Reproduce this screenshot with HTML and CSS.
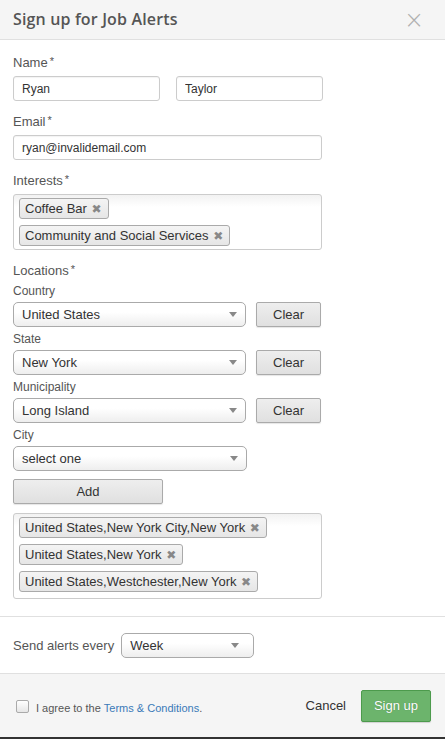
FILE: index.html
```html
<!DOCTYPE html>
<html lang="en">
<head>
    <meta charset="UTF-8">
    <meta name="viewport" content="width=device-width, initial-scale=1.0">
    <title>Sign up for Job Alerts</title>
    <link rel="stylesheet" href="styles.css">
</head>
<body>
    <div class="modal">
        <div class="modal-header">
            <h3>Sign up for Job Alerts</h3>
            <span class="close">&times;</span>
        </div>

        <div class="modal-body">
            <div class="field">
                <label>Name<span class="req">*</span></label>
                <div class="name-row">
                    <input type="text" value="Ryan">
                    <input type="text" value="Taylor">
                </div>
            </div>

            <div class="field">
                <label>Email<span class="req">*</span></label>
                <input type="text" class="wide" value="ryan@invalidemail.com">
            </div>

            <div class="field">
                <label>Interests<span class="req">*</span></label>
                <div class="tag-box">
                    <span class="tag">Coffee Bar <b>&#10006;</b></span>
                    <span class="tag">Community and Social Services <b>&#10006;</b></span>
                </div>
            </div>

            <div class="field locations">
                <label>Locations<span class="req">*</span></label>

                <div class="sub">
                    <div class="sub-label">Country</div>
                    <div class="select-row">
                        <div class="select"><span>United States</span><i class="arrow"></i></div>
                        <button class="btn">Clear</button>
                    </div>
                </div>
                <div class="sub">
                    <div class="sub-label">State</div>
                    <div class="select-row">
                        <div class="select"><span>New York</span><i class="arrow"></i></div>
                        <button class="btn">Clear</button>
                    </div>
                </div>
                <div class="sub">
                    <div class="sub-label">Municipality</div>
                    <div class="select-row">
                        <div class="select"><span>Long Island</span><i class="arrow"></i></div>
                        <button class="btn">Clear</button>
                    </div>
                </div>
                <div class="sub">
                    <div class="sub-label">City</div>
                    <div class="select-row">
                        <div class="select"><span>select one</span><i class="arrow"></i></div>
                    </div>
                </div>

                <button class="btn add-btn">Add</button>

                <div class="tag-box loc-box">
                    <span class="tag">United States,New York City,New York <b>&#10006;</b></span>
                    <span class="tag">United States,New York <b>&#10006;</b></span>
                    <span class="tag">United States,Westchester,New York <b>&#10006;</b></span>
                </div>
            </div>
        </div>

        <div class="alerts-row">
            <span>Send alerts every</span>
            <div class="select small"><span>Week</span><i class="arrow"></i></div>
        </div>

        <div class="modal-footer">
            <label class="agree">
                <span class="checkbox"></span>
                I agree to the <a href="#">Terms &amp; Conditions</a>.
            </label>
            <a href="#" class="cancel">Cancel</a>
            <button class="btn-green">Sign up</button>
        </div>
    </div>
</body>
</html>
```

FILE: styles.css
```css
* {
    margin: 0;
    padding: 0;
    box-sizing: border-box;
    font-family: 'Liberation Sans', Arial, sans-serif;
}

body {
    background-color: #333;
    height: 739px;
    overflow: hidden;
}

.modal {
    background-color: #fff;
    height: 737px;
    display: flex;
    flex-direction: column;
}

.modal-header {
    background-color: #f5f5f5;
    border-bottom: 1px solid #e0e0e0;
    height: 40px;
    padding: 0 13px;
    display: flex;
    align-items: center;
}

.modal-header h3 {
    font-family: 'Open Sans', sans-serif;
    font-size: 16px;
    font-weight: 600;
    letter-spacing: 0.15px;
    color: #555;
    margin-top: -2px;
}

.modal-header .close {
    margin-left: auto;
    margin-right: 8px;
    font-size: 24px;
    font-weight: 300;
    color: #b0b0b0;
    line-height: 1;
    font-family: 'DejaVu Sans', sans-serif;
}

.modal-body {
    padding: 15px 13px 0;
    width: 334px;
}

.field {
    margin-bottom: 13px;
}

.field label {
    display: block;
    font-size: 13px;
    line-height: 16px;
    color: #555;
    margin-bottom: 5px;
}

.req {
    font-size: 11px;
    vertical-align: top;
    margin-left: 2px;
    line-height: 12px;
}

.name-row {
    display: flex;
    gap: 16px;
}

input {
    height: 25px;
    width: 147px;
    border: 1px solid #ccc;
    border-radius: 3px;
    padding: 0 8px;
    font-size: 12px;
    color: #333;
    box-shadow: inset 0 1px 1px rgba(0, 0, 0, 0.05);
}

input.wide {
    width: 309px;
}

.tag-box {
    border: 1px solid #ccc;
    border-radius: 3px;
    width: 309px;
    padding: 3px 5px 3px;
    display: flex;
    flex-direction: column;
    align-items: flex-start;
    gap: 6px;
    background: linear-gradient(#f2f2f2, #fff 12px);
}

.tag {
    display: inline-block;
    height: 21px;
    line-height: 19px;
    padding: 0 6px 0 5px;
    font-size: 13px;
    color: #333;
    border: 1px solid #aaa;
    border-radius: 3px;
    background: linear-gradient(#f4f4f4, #e6e6e6);
}

.tag b {
    font-size: 12px;
    color: #888;
    margin-left: 1px;
    font-family: 'DejaVu Sans', sans-serif;
}

.locations label {
    margin-bottom: 5px;
}

.sub {
    margin-bottom: 5px;
}

.sub-label {
    font-size: 12px;
    line-height: 15px;
    color: #555;
    margin-bottom: 3px;
}

.select-row {
    display: flex;
    gap: 10px;
}

.select {
    width: 234px;
    height: 25px;
    border: 1px solid #aaa;
    border-radius: 5px;
    background: linear-gradient(#fff, #fff 40%, #eee);
    display: flex;
    align-items: center;
    padding: 0 8px 0 8px;
    font-size: 13px;
    color: #333;
}

.arrow {
    margin-left: auto;
    width: 0;
    height: 0;
    border-left: 4px solid transparent;
    border-right: 4px solid transparent;
    border-top: 5px solid #888;
}

.btn {
    width: 65px;
    height: 25px;
    border: 1px solid #aaa;
    border-radius: 2px;
    background: linear-gradient(#eee, #e0e0e0);
    font-size: 13px;
    color: #333;
    box-shadow: 0 1px 1px rgba(0, 0, 0, 0.1);
}

.add-btn {
    display: block;
    width: 150px;
    height: 25px;
    margin-top: 8px;
}

.loc-box {
    margin-top: 9px;
    padding-bottom: 6px;
}

.alerts-row {
    margin-top: 4px;
    border-top: 1px solid #e0e0e0;
    border-bottom: 1px solid #e0e0e0;
    height: 58px;
    padding: 0 13px;
    display: flex;
    align-items: center;
    gap: 7px;
    font-size: 13px;
    color: #555;
}

.select.small {
    width: 133px;
    height: 25px;
    padding-right: 14px;
}

.modal-footer {
    flex: 1;
    background-color: #f5f5f5;
    display: flex;
    align-items: center;
    padding: 0 14px 0 16px;
}

.agree {
    display: flex;
    align-items: center;
    font-size: 11px;
    color: #555;
    margin-top: 5px;
}

.checkbox {
    width: 13px;
    height: 13px;
    border: 1px solid #aaa;
    border-radius: 2px;
    background: linear-gradient(#fff, #e6e6e6);
    margin-right: 7px;
    margin-top: -4px;
}

.agree a {
    color: #3a7ab8;
    text-decoration: none;
    margin-left: 3px;
}

.cancel {
    margin-left: auto;
    margin-right: 15px;
    font-size: 13px;
    color: #333;
    text-decoration: none;
}

.btn-green {
    width: 70px;
    height: 32px;
    background-color: #6cb46c;
    border: 1px solid #4c9a4c;
    border-radius: 2px;
    color: #fff;
    font-size: 13px;
    text-shadow: 0 0 1px rgba(0, 0, 0, 0.3);
    box-shadow: 0 1px 1px rgba(0, 0, 0, 0.15);
}
```
